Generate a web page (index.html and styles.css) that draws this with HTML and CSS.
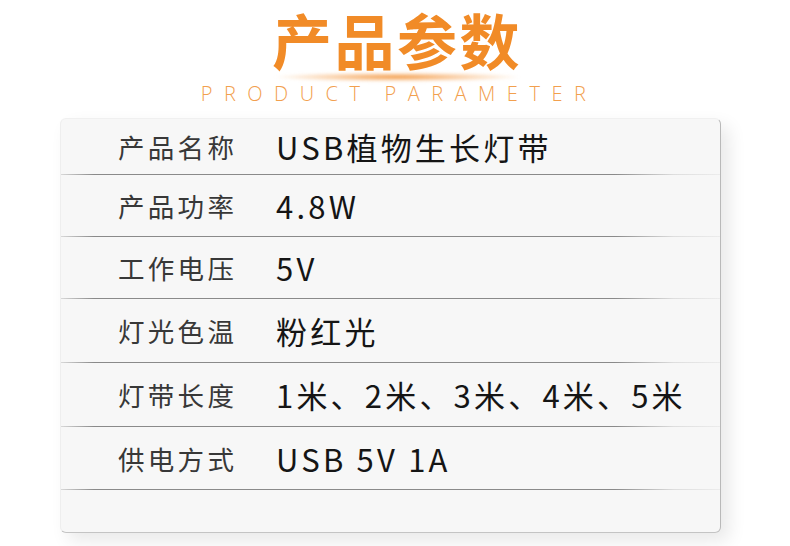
FILE: index.html
```html
<!DOCTYPE html>
<html lang="zh-CN">
<head>
<meta charset="utf-8">
<title>产品参数</title>
<link rel="stylesheet" href="styles.css">
</head>
<body>
<div class="page">
  <header class="head">
    <h1 class="title">产品参数</h1>
    <div class="glow"></div>
    <p class="sub">PRODUCT<span class="gap"></span>PARAMETER</p>
  </header>
  <section class="card">
    <div class="row r1"><span class="label">产品名称</span><span class="value">USB植物生长灯带</span></div>
    <div class="row r2"><span class="label">产品功率</span><span class="value">4.8W</span></div>
    <div class="row r3"><span class="label">工作电压</span><span class="value">5V</span></div>
    <div class="row r4"><span class="label">灯光色温</span><span class="value">粉红光</span></div>
    <div class="row r5"><span class="label">灯带长度</span><span class="value">1米、2米、3米、4米、5米</span></div>
    <div class="row r6"><span class="label">供电方式</span><span class="value">USB 5V 1A</span></div>
    <div class="tail"></div>
  </section>
</div>
</body>
</html>
```
FILE: styles.css
```css
html, body {
  margin: 0;
  padding: 0;
  background: #ffffff;
}
.page {
  width: 790px;
  height: 546px;
  overflow: hidden;
  font-family: "Noto Sans CJK SC", "Noto Sans", sans-serif;
}
.head {
  height: 118px;
  display: flex;
  flex-direction: column;
  align-items: center;
}
.title {
  margin: 11px 0 0 4px;
  font-family: "Liberation Sans", "Noto Sans CJK SC", sans-serif;
  font-size: 60px;
  line-height: 67px;
  font-weight: 700;
  letter-spacing: 2.5px;
  color: #f18b27;
}
.glow {
  margin: -6px 0 0 4px;
  width: 250px;
  height: 10px;
  border-radius: 50%;
  background: radial-gradient(ellipse at center, rgba(240,130,25,0.8) 0%, rgba(244,150,60,0.4) 38%, rgba(255,255,255,0) 70%);
  filter: blur(1.5px);
}
.sub {
  margin: 1px 0 0 8px;
  font-family: "Open Sans", "Lato", sans-serif;
  font-weight: 300;
  font-size: 20px;
  line-height: 22px;
  letter-spacing: 11.5px;
  color: #f2a04e;
  display: flex;
  align-items: center;
}
.gap {
  display: inline-block;
  width: 13px;
}
.card {
  margin-left: 60px;
  width: 659px;
  height: 413px;
  background: #f7f7f7;
  border-radius: 6px;
  border-right: 1px solid #b9b9b9;
  border-bottom: 1px solid #c4c4c4;
  border-top: 1px solid #f0f0f0;
  border-left: 1px solid #eeeeee;
  box-shadow: 8px 8px 18px rgba(0,0,0,0.09);
  display: flex;
  flex-direction: column;
}
.row {
  display: grid;
  grid-template-columns: 158px 1fr;
  align-items: center;
  padding-left: 57px;
  background-image: linear-gradient(to right, #d8d8d8 0%, #8a8a8a 5%, #8a8a8a 84%, #dedede 93%, #ececec 100%);
  background-size: 100% 1px;
  background-repeat: no-repeat;
  background-position: left bottom;
}
.r1 { height: 56px; }
.r2 { height: 62px; }
.r3 { height: 62px; }
.r4 { height: 64px; }
.r5 { height: 64px; }
.r6 { height: 63px; }
.tail { flex: 1; }
.label {
  font-size: 26.5px;
  letter-spacing: 3.3px;
  color: #383838;
  line-height: 30px;
}
.value {
  font-size: 31px;
  color: #151515;
  line-height: 34px;
  letter-spacing: 3.2px;
}
```
